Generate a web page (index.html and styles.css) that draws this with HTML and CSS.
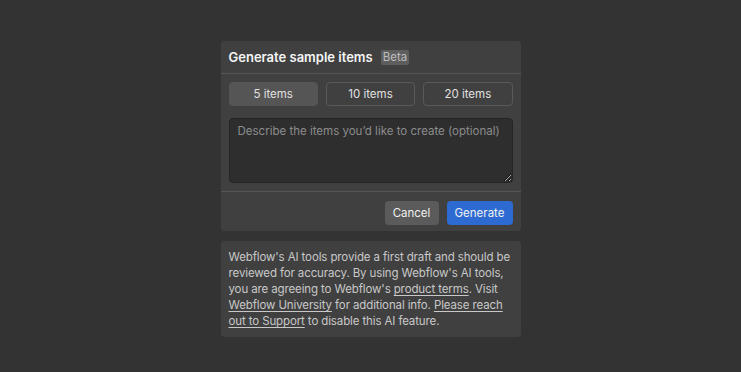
FILE: index.html
```html
<!DOCTYPE html>
<html>
<head>
<meta charset="utf-8">
<link rel="stylesheet" href="styles.css">
</head>
<body>
<div class="stack">
  <div class="panel">
    <div class="header">
      <span class="title">Generate sample items</span>
      <span class="badge">Beta</span>
    </div>
    <div class="body">
      <div class="counts">
        <button class="count active">5 items</button>
        <button class="count">10 items</button>
        <button class="count">20 items</button>
      </div>
      <textarea class="prompt" placeholder="Describe the items you’d like to create (optional)"></textarea>
    </div>
    <div class="footer">
      <button class="btn cancel">Cancel</button>
      <button class="btn primary">Generate</button>
    </div>
  </div>
  <div class="note">
    Webflow's AI tools provide a first draft and should be reviewed for accuracy. By using Webflow's AI tools, you are agreeing to Webflow's <a href="#">product terms</a>. Visit <a href="#">Webflow University</a> for additional info. <a href="#">Please reach out to Support</a> to disable this AI feature.
  </div>
</div>
</body>
</html>
```
FILE: styles.css
```css
html, body {
  margin: 0;
  padding: 0;
  background: #333333;
  height: 100%;
}
body {
  font-family: Inter, "Noto Sans", sans-serif;
  -webkit-font-smoothing: antialiased;
}
.stack {
  width: 300px;
  margin: 0 auto;
  padding-top: 41px;
  display: flex;
  flex-direction: column;
  gap: 10px;
}
.panel {
  background: #404040;
  border-radius: 4px;
  display: flex;
  flex-direction: column;
}
.header {
  height: 33px;
  box-sizing: border-box;
  padding: 0 8px;
  display: flex;
  align-items: center;
  gap: 8px;
  border-bottom: 1px solid #555555;
}
.title {
  font-size: 13px;
  font-weight: 600;
  color: #f5f5f5;
}
.badge {
  background: #5e5e5e;
  color: #bdbdbd;
  font-size: 11.5px;
  line-height: 15px;
  padding: 0 2px;
  border-radius: 2px;
}
.body {
  padding: 8px;
  display: flex;
  flex-direction: column;
  gap: 12px;
}
.counts {
  display: grid;
  grid-template-columns: 1fr 1fr 1fr;
  gap: 8px;
}
.count {
  height: 24px;
  font-family: inherit;
  font-size: 11.5px;
  color: #e0e0e0;
  background: transparent;
  border: 1px solid #595959;
  border-radius: 4px;
  padding: 0;
}
.count.active {
  background: #555555;
  border-color: #555555;
}
.prompt {
  display: block;
  height: 65px;
  box-sizing: border-box;
  resize: vertical;
  background: #2e2e2e;
  border: 1px solid #242424;
  border-radius: 4px;
  color: #e0e0e0;
  font-family: inherit;
  font-size: 11.5px;
  line-height: 16px;
  padding: 4px 8px;
  outline: none;
}
.prompt::placeholder {
  color: #8c8c8c;
}
.footer {
  border-top: 1px solid #555555;
  padding: 9px 8px 6px;
  display: flex;
  justify-content: flex-end;
  gap: 8px;
}
.btn {
  height: 24px;
  font-family: inherit;
  font-size: 11.5px;
  border: none;
  border-radius: 4px;
  padding: 0 8px;
  color: #f0f0f0;
}
.cancel {
  background: #5b5b5b;
  width: 54px;
}
.primary {
  background: #2d6bd2;
  width: 66px;
}
.note {
  background: #404040;
  border-radius: 4px;
  padding: 8px;
  font-size: 11.5px;
  line-height: 16px;
  letter-spacing: -0.12px;
  color: #c8c8c8;
}
.note a {
  color: #c8c8c8;
  text-decoration: underline;
  text-underline-offset: 2px;
}
```
